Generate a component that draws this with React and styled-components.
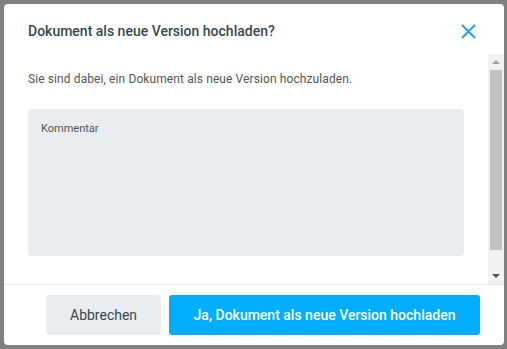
import React from 'react';
import styled, { createGlobalStyle } from 'styled-components';

const GlobalStyle = createGlobalStyle`
  html, body {
    margin: 0;
    padding: 0;
    background: #808080;
    font-family: Roboto, "Liberation Sans", sans-serif;
  }
`;

// Backdrop and dialog shell
const Backdrop = styled.div`
  height: 349px;
  padding: 4px 3px 4px 4px;
  box-sizing: border-box;
`;

const Dialog = styled.div`
  width: 500px;
  height: 341px;
  background: #fff;
  border-radius: 4px;
  display: flex;
  flex-direction: column;
  overflow: hidden;
`;

const Header = styled.div`
  height: 50px;
  flex-shrink: 0;
  display: flex;
  align-items: center;
  justify-content: space-between;
  padding: 0 24px;
`;

const Title = styled.h2`
  margin: 0;
  font-size: 14px;
  font-weight: 500;
  color: #37474f;
  padding-top: 4px;
`;

const CloseButton = styled.button`
  width: 24px;
  height: 24px;
  border: none;
  background: none;
  padding: 0;
  display: flex;
  align-items: center;
  justify-content: center;
  cursor: pointer;
  margin-top: 4px;
`;

const Body = styled.div`
  flex: 1;
  min-height: 0;
  display: flex;
`;

const Content = styled.div`
  flex: 1;
  overflow: hidden;
  padding: 16px 24px 51px;
`;

const Scrollbar = styled.div`
  width: 16px;
  flex-shrink: 0;
  background: #f1f1f1;
  display: flex;
  flex-direction: column;
`;

const ArrowButton = styled.div`
  height: 16px;
  flex-shrink: 0;
  display: flex;
  align-items: center;
  justify-content: center;

  &::before {
    content: "";
    width: 0;
    height: 0;
    border-left: 4px solid transparent;
    border-right: 4px solid transparent;
    ${p => (p.$down
      ? 'border-top: 4px solid #505050;'
      : 'border-bottom: 4px solid #a3a3a3;')}
  }
`;

const Track = styled.div`
  flex: 1;
  padding: 0 2px;
`;

const Thumb = styled.div`
  height: 180px;
  background: #c1c1c1;
`;

const Text = styled.p`
  margin: 0 0 21px;
  font-size: 12px;
  line-height: 18px;
  letter-spacing: 0.1px;
  color: #555;
`;

const Comment = styled.textarea`
  display: block;
  width: 100%;
  height: 147px;
  box-sizing: border-box;
  border: none;
  border-radius: 4px;
  background: #e9edf0;
  padding: 13px 13px;
  resize: none;
  font-family: Roboto, "Liberation Sans", sans-serif;
  font-size: 11px;
  color: #555;
  outline: none;

  &::placeholder {
    color: #555;
  }
`;

// Footer with actions
const Footer = styled.div`
  flex-shrink: 0;
  border-top: 1px solid #e8e8e8;
  padding: 10px 24px;
  display: flex;
  justify-content: flex-end;
  gap: 8px;
`;

const Button = styled.button`
  height: 40px;
  border: none;
  border-radius: 3px;
  padding: 0 24px;
  font-family: Roboto, "Liberation Sans", sans-serif;
  font-size: 14px;
  font-weight: ${p => (p.$primary ? 500 : 400)};
  background: ${p => (p.$primary ? '#00aeff' : '#e9edf0')};
  color: ${p => (p.$primary ? '#fff' : '#37474f')};
  cursor: pointer;
`;

const App = () => (
  <>
    <GlobalStyle />
    <Backdrop>
      <Dialog>
        <Header>
          <Title>Dokument als neue Version hochladen?</Title>
          <CloseButton aria-label="Schließen">
            <svg width="15" height="15" viewBox="0 0 15 15">
              <path d="M1 1L14 14M14 1L1 14" stroke="#1aa7f0" strokeWidth="2" />
            </svg>
          </CloseButton>
        </Header>
        <Body>
          <Content>
            <Text>Sie sind dabei, ein Dokument als neue Version hochzuladen.</Text>
            <Comment placeholder="Kommentar" />
          </Content>
          <Scrollbar>
            <ArrowButton />
            <Track>
              <Thumb />
            </Track>
            <ArrowButton $down />
          </Scrollbar>
        </Body>
        <Footer>
          <Button style={{ width: 115 }}>Abbrechen</Button>
          <Button $primary style={{ width: 311 }}>Ja, Dokument als neue Version hochladen</Button>
        </Footer>
      </Dialog>
    </Backdrop>
  </>
);

export default App;
